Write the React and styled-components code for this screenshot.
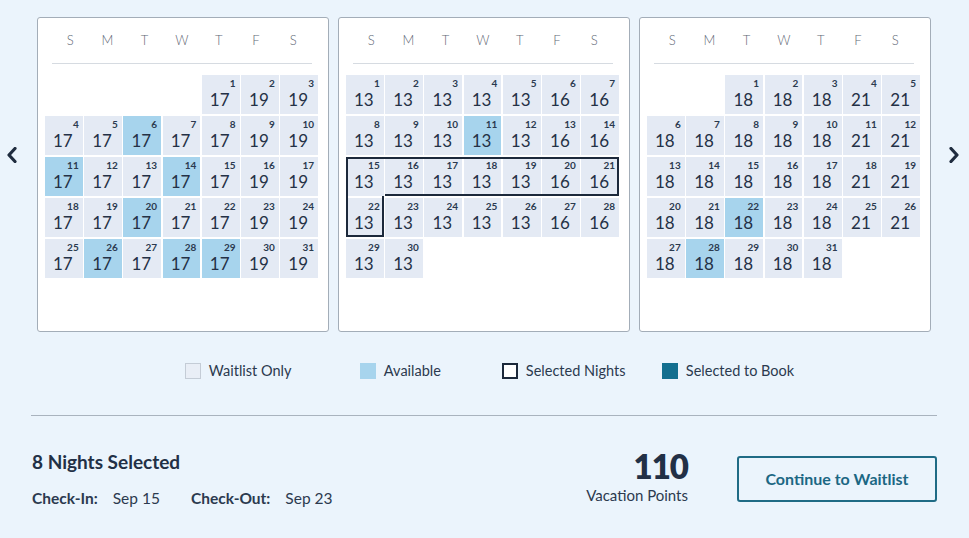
import styled, { createGlobalStyle } from 'styled-components';

const GlobalStyle = createGlobalStyle`
  body {
    margin: 0;
    background: #ebf4fc;
    font-family: Lato, "Open Sans", sans-serif;
    color: #243147;
  }
`;

const DAYS = ['S', 'M', 'T', 'W', 'T', 'F', 'S'];

// start = weekday of the 1st, weekend = price on Fri/Sat
const months = [
  { start: 4, length: 31, weekday: 17, weekend: 19, available: [6, 11, 14, 20, 26, 28, 29], selected: [] },
  { start: 0, length: 30, weekday: 13, weekend: 16, available: [11], selected: [15, 16, 17, 18, 19, 20, 21, 22] },
  { start: 2, length: 31, weekday: 18, weekend: 21, available: [22, 28], selected: [] },
];

const GAP_X = 1.5;
const GAP_Y = 2;

function buildCells(month) {
  const cells = [];
  for (let i = 0; i < month.start; i++) cells.push(null);
  for (let d = 1; d <= month.length; d++) {
    const dow = (month.start + d - 1) % 7;
    cells.push({
      day: d,
      price: dow >= 5 ? month.weekend : month.weekday,
      available: month.available.includes(d),
      selected: month.selected.includes(d),
    });
  }
  return cells;
}

function Chevron({ dir }) {
  const pts = dir === 'left' ? '8,1.5 2,8 8,14.5' : '2,1.5 8,8 2,14.5';
  return (
    <svg width="10" height="16" viewBox="0 0 10 16">
      <polyline points={pts} fill="none" stroke="#1f2c3f" strokeWidth="3.2" strokeLinecap="round" strokeLinejoin="round" />
    </svg>
  );
}

function Calendar({ month }) {
  const cells = buildCells(month);
  const isSel = (i) => cells[i] && cells[i].selected;
  return (
    <Card>
      <WeekHeader>
        {DAYS.map((d, i) => (
          <WeekDay key={i}>{d}</WeekDay>
        ))}
      </WeekHeader>
      <Grid>
        {cells.map((c, i) => {
          if (!c) return <Blank key={i} />;
          const col = i % 7;
          const edges = c.selected
            ? {
                l: col > 0 && isSel(i - 1),
                r: col < 6 && isSel(i + 1),
                t: isSel(i - 7),
                b: isSel(i + 7),
              }
            : null;
          return (
            <Cell key={i} $available={c.available}>
              <DayNum>{c.day}</DayNum>
              <Price>{c.price}</Price>
              {edges && <Outline $l={edges.l} $r={edges.r} $t={edges.t} $b={edges.b} />}
            </Cell>
          );
        })}
      </Grid>
    </Card>
  );
}

export default function App() {
  return (
    <Page>
      <GlobalStyle />
      <CalendarRow>
        <ArrowCol $side="left">
          <ArrowButton aria-label="previous">
            <Chevron dir="left" />
          </ArrowButton>
        </ArrowCol>
        <Cards>
          {months.map((m, i) => (
            <Calendar key={i} month={m} />
          ))}
        </Cards>
        <ArrowCol $side="right">
          <ArrowButton aria-label="next">
            <Chevron dir="right" />
          </ArrowButton>
        </ArrowCol>
      </CalendarRow>

      <Legend>
        <LegendItem $w={175}>
          <Swatch $kind="waitlist" />
          Waitlist Only
        </LegendItem>
        <LegendItem $w={142}>
          <Swatch $kind="available" />
          Available
        </LegendItem>
        <LegendItem $w={160}>
          <Swatch $kind="selected" />
          Selected Nights
        </LegendItem>
        <LegendItem>
          <Swatch $kind="book" />
          Selected to Book
        </LegendItem>
      </Legend>

      <Divider />

      <Summary>
        <Stay>
          <NightsTitle>8 Nights Selected</NightsTitle>
          <Dates>
            <Label>Check-In:</Label>
            <DateVal>Sep 15</DateVal>
            <Label>Check-Out:</Label>
            <DateVal>Sep 23</DateVal>
          </Dates>
        </Stay>
        <Points>
          <PointsValue>110</PointsValue>
          <PointsLabel>Vacation Points</PointsLabel>
        </Points>
        <WaitlistButton>Continue to Waitlist</WaitlistButton>
      </Summary>
    </Page>
  );
}

const Page = styled.div`
  width: 969px;
  height: 538px;
  padding-top: 17px;
  box-sizing: border-box;
`;

const CalendarRow = styled.div`
  display: flex;
`;

const ArrowCol = styled.div`
  width: ${p => (p.$side === 'left' ? 37 : 38)}px;
  display: flex;
  justify-content: ${p => (p.$side === 'left' ? 'flex-start' : 'flex-end')};
  padding: 130px ${p => (p.$side === 'left' ? '0 0 6px' : '9px 0 0')};
  box-sizing: border-box;
`;

const ArrowButton = styled.button`
  background: none;
  border: none;
  padding: 0;
  width: 12px;
  height: 16px;
  display: grid;
  place-items: center;
  cursor: pointer;
`;

const Cards = styled.div`
  display: flex;
  gap: 9px;
`;

const Card = styled.div`
  width: 292px;
  height: 315px;
  box-sizing: border-box;
  background: #fff;
  border: 1px solid #a3adb8;
  border-radius: 3px;
  padding: 0 10px 0 7px;
`;

const WeekHeader = styled.div`
  display: grid;
  grid-template-columns: repeat(7, 1fr);
  margin: 0 6px 0 7px;
  padding: 14px 0 15px;
  border-bottom: 1px solid #d6dbe1;
`;

const WeekDay = styled.div`
  text-align: center;
  font-size: 13px;
  font-weight: 300;
  color: #5f6976;
  letter-spacing: 0.5px;
`;

const Grid = styled.div`
  display: grid;
  grid-template-columns: repeat(7, 1fr);
  grid-auto-rows: 39px;
  column-gap: ${GAP_X}px;
  row-gap: ${GAP_Y}px;
  margin-top: 11px;
`;

const Blank = styled.div``;

const Cell = styled.div`
  position: relative;
  background: ${p => (p.$available ? '#a7d4ed' : '#e4eaf4')};
  display: flex;
  flex-direction: column;
  padding: 2px 4px 0 8px;
`;

const DayNum = styled.span`
  align-self: flex-end;
  font-size: 10px;
  font-weight: 700;
  color: #2b3a4f;
  line-height: 13px;
`;

const Price = styled.span`
  font-size: 17px;
  font-weight: 400;
  color: #243146;
  line-height: 20px;
`;

const Outline = styled.div`
  position: absolute;
  top: ${p => (p.$t ? -GAP_Y : 0)}px;
  bottom: ${p => (p.$b ? -GAP_Y : 0)}px;
  left: 0;
  right: ${p => (p.$r ? -GAP_X : 0)}px;
  border-style: solid;
  border-color: #1c293b;
  border-width: ${p => `${p.$t ? 0 : 2}px ${p.$r ? 0 : 2}px ${p.$b ? 0 : 2}px ${p.$l ? 0 : 2}px`};
  pointer-events: none;
`;

const Legend = styled.div`
  display: flex;
  justify-content: center;
  padding: 30px 0 0 10px;
`;

const LegendItem = styled.div`
  width: ${p => (p.$w ? `${p.$w}px` : 'auto')};
  display: flex;
  align-items: center;
  gap: 8px;
  font-size: 14.5px;
  color: #2b3a4f;
`;

const swatchStyles = {
  waitlist: 'background: #e9eef6; border: 1px solid #c4ccd6;',
  available: 'background: #a7d4ed; border: 1px solid #a7d4ed;',
  selected: 'background: #fff; border: 2px solid #1c293b;',
  book: 'background: #136f8f; border: 1px solid #136f8f;',
};

const Swatch = styled.span`
  width: 16px;
  height: 16px;
  box-sizing: border-box;
  ${p => swatchStyles[p.$kind]}
`;

const Divider = styled.hr`
  margin: 36px 32px 0 31px;
  border: none;
  border-top: 1px solid #a9b3be;
`;

const Summary = styled.div`
  display: flex;
  align-items: center;
  padding: 34px 32px 0;
`;

const Stay = styled.div`
  flex: 1;
  display: flex;
  flex-direction: column;
  gap: 16px;
  margin-top: 0;
`;

const NightsTitle = styled.div`
  font-size: 19px;
  font-weight: 700;
  color: #223046;
`;

const Dates = styled.div`
  display: flex;
  align-items: baseline;
  font-size: 15.5px;
  color: #2b3a4f;
`;

const Label = styled.span`
  font-weight: 700;
  margin-right: 15px;
`;

const DateVal = styled.span`
  margin-right: 31px;
`;

const Points = styled.div`
  display: flex;
  flex-direction: column;
  align-items: flex-end;
  margin-right: 49px;
  margin-top: -2px;
`;

const PointsValue = styled.div`
  font-size: 33px;
  font-weight: 800;
  letter-spacing: -1px;
  color: #223046;
  line-height: 36px;
  margin-bottom: 2px;
  margin-top: -3px;
`;

const PointsLabel = styled.div`
  font-size: 15px;
  color: #2b3a4f;
`;

const WaitlistButton = styled.button`
  width: 200px;
  height: 46px;
  background: transparent;
  border: 2px solid #1f6b85;
  border-radius: 3px;
  color: #1b6783;
  font-family: Lato, "Open Sans", sans-serif;
  font-size: 16px;
  font-weight: 700;
  cursor: pointer;
`;
